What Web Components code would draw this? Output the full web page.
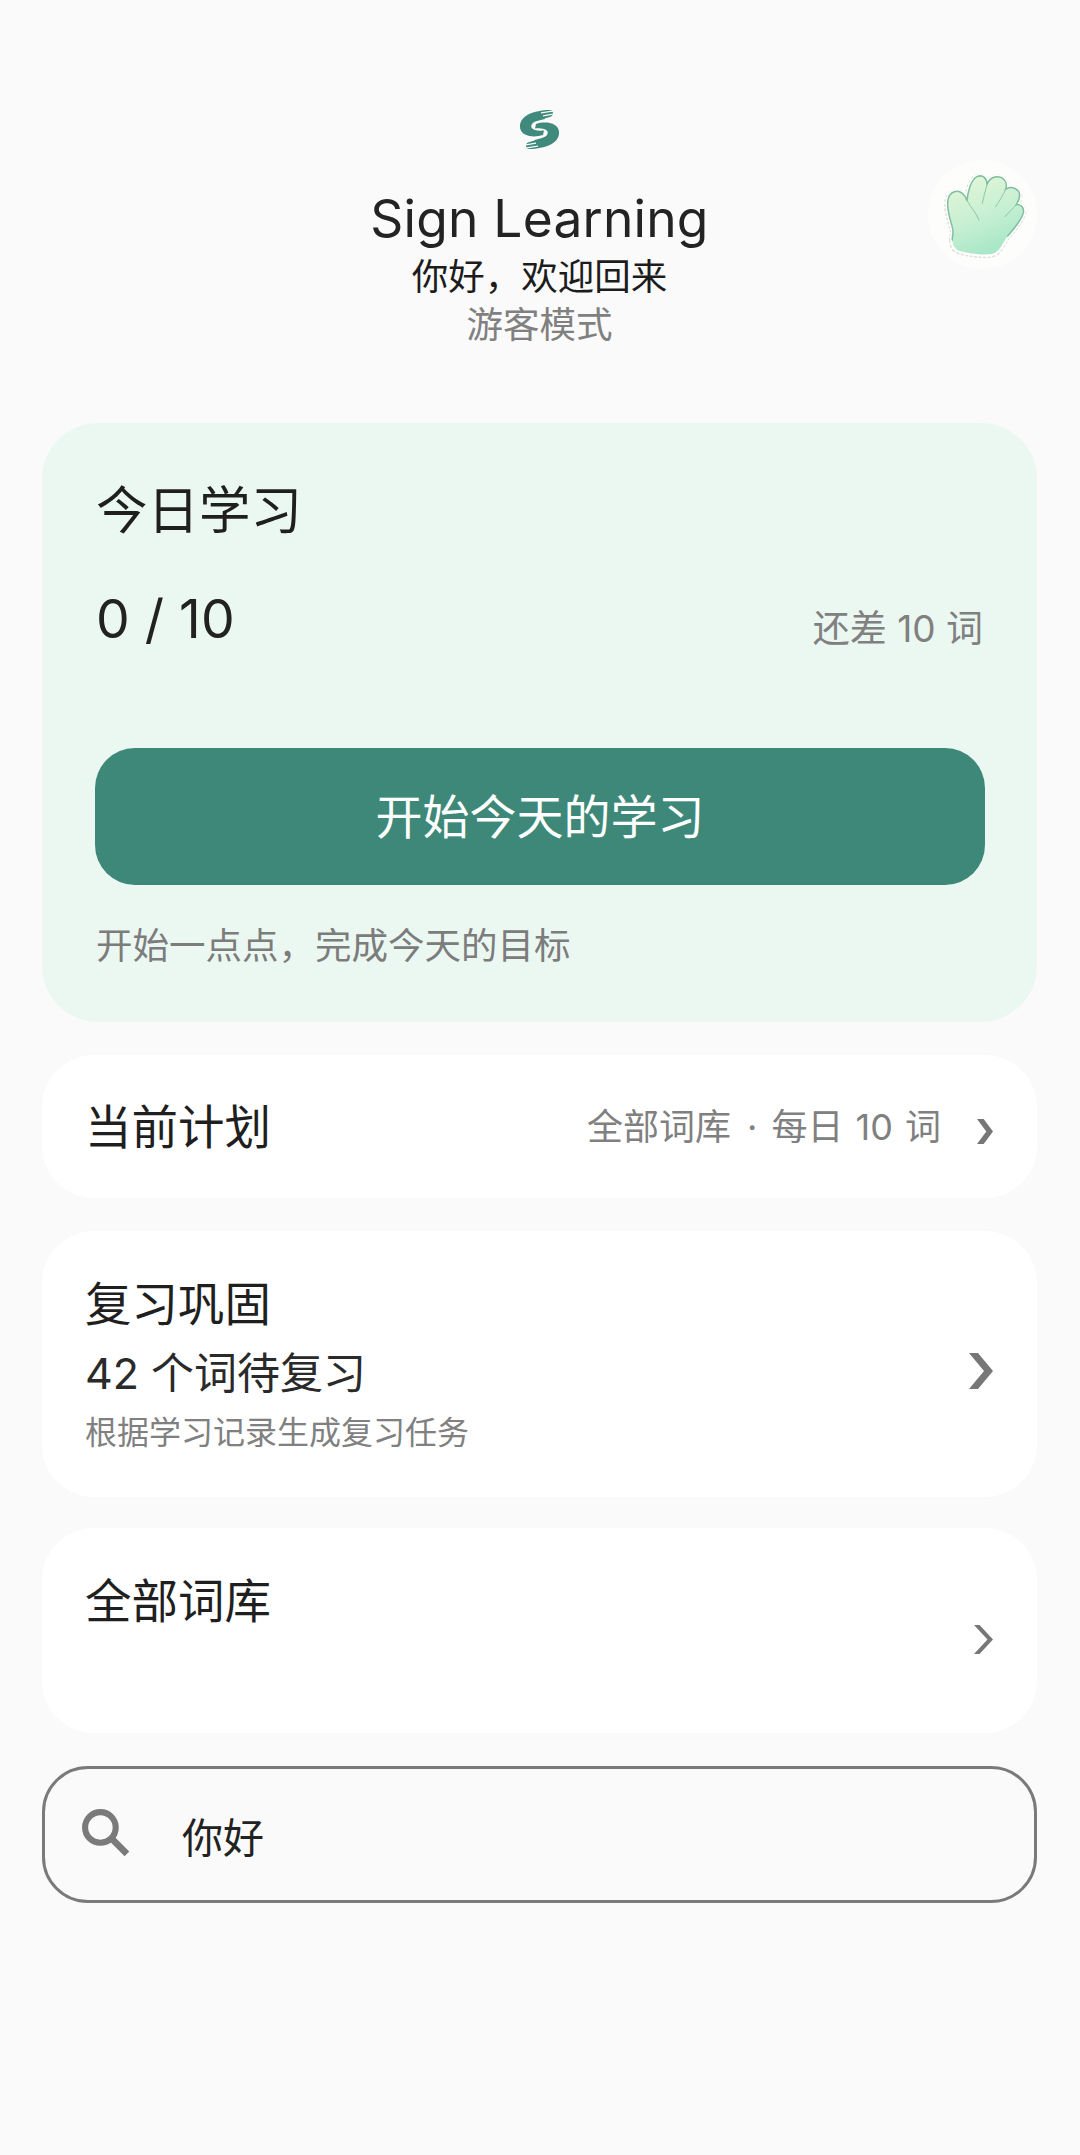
<!DOCTYPE html>
<html lang="zh-CN"><head><meta charset="utf-8"><title>Sign Learning</title>
<style>
html,body{margin:0;padding:0}
body{background:#fafafa;font-family:Inter,"Noto Sans CJK SC",sans-serif;color:#222;min-height:2155px}
</style></head><body>
<sl-app>
  <sl-header title-text="Sign Learning" greeting="你好，欢迎回来" mode="游客模式"></sl-header>
  <today-card heading="今日学习" progress="0 / 10" remain="还差 10 词" action="开始今天的学习" hint="开始一点点，完成今天的目标"></today-card>
  <plan-row heading="当前计划" left="全部词库" right="每日 10 词"></plan-row>
  <list-card heading="复习巩固" chev="24,36,9">
    <span slot="main">42 个词待复习</span>
    <span slot="sub">根据学习记录生成复习任务</span>
  </list-card>
  <list-card heading="全部词库" chev="19,29,7" tall></list-card>
  <search-box value="你好"></search-box>
</sl-app>
<script>
const def=(n,html,init)=>customElements.define(n,class extends HTMLElement{
  constructor(){super();this.attachShadow({mode:'open'}).innerHTML=html;}
  connectedCallback(){init&&init(this,this.shadowRoot)}
});
const chevSvg=(w,h,t)=>`<svg width="${w}" height="${h}" viewBox="0 0 24 36" preserveAspectRatio="none" aria-hidden="true"><polygon points="0,0 ${t},0 24,18 ${t},36 0,36 ${24-t},18" fill="#777"/></svg>`;

def('sl-app',`<style>:host{display:flex;flex-direction:column;gap:33px;padding:0 43px 0 42px;box-sizing:border-box;width:1080px}</style><slot></slot>`);

def('sl-logo',`<style>:host{display:block;width:41px;height:43px}svg{display:block}</style>
<svg width="41" height="43" viewBox="0 0 41 42" aria-hidden="true">
<g id="h"><path d="M31 1.5 C21 1.5 9 4 3.5 10.5 C-0.5 15.5 0 23 6 26 C11 28.5 18 28.5 24 26.5 L25 22 C20 22.5 14 22 12.5 19 C11.5 16 14 13.5 18 12.5 C23 11 29 10 33 7.5 C35 5 34 1.5 31 1.5 Z" fill="#3f8a7c"/>
<path d="M22 4.4 L35 2.4 M24 7.4 L35.5 5.4 M26 10.4 L33 8.8" stroke="#fafafa" stroke-width="1.1" fill="none"/></g>
<use href="#h" transform="rotate(180 20.5 21)"/>
</svg>`);

def('sl-avatar',`<style>:host{display:flex;align-items:center;justify-content:center;width:109px;height:109px;border-radius:50%;background:#fdfefb}svg{display:block;transform:translate(2px,0)}</style>
<svg width="109" height="109" viewBox="85 60 327 327" aria-hidden="true">
<defs><linearGradient id="g" x1="0.2" y1="0" x2="0.6" y2="1"><stop offset="0" stop-color="#e4f6d8"/><stop offset=".55" stop-color="#c6efd2"/><stop offset="1" stop-color="#a5e6c6"/></linearGradient></defs>
<path d="M152 300 C150 288 158 284 152 262 C146 238 132 205 140 175 C146 154 168 148 182 160 C190 166 194 176 196 182 C198 160 206 120 226 110 C244 102 256 116 256 134 C262 114 282 106 298 112 C314 120 316 136 312 148 C324 138 344 142 352 156 C358 170 350 184 344 194 C358 192 370 204 364 222 C356 244 336 268 318 288 C304 306 296 336 270 342 C240 346 200 340 172 332 C158 328 152 312 152 300 Z" fill="#fff" stroke="#dcdedc" stroke-width="18" stroke-linejoin="round" stroke-dasharray="8 5" transform="translate(-1 2)"/>
<path d="M152 300 C150 288 158 284 152 262 C146 238 132 205 140 175 C146 154 168 148 182 160 C190 166 194 176 196 182 C198 160 206 120 226 110 C244 102 256 116 256 134 C262 114 282 106 298 112 C314 120 316 136 312 148 C324 138 344 142 352 156 C358 170 350 184 344 194 C358 192 370 204 364 222 C356 244 336 268 318 288 C304 306 296 336 270 342 C240 346 200 340 172 332 C158 328 152 312 152 300 Z" fill="url(#g)" stroke="#fff" stroke-width="13" stroke-linejoin="round" paint-order="stroke"/>
<path d="M152 300 C150 288 158 284 152 262 C146 238 132 205 140 175 C146 154 168 148 182 160 C190 166 194 176 196 182 C198 160 206 120 226 110 C244 102 256 116 256 134 C262 114 282 106 298 112 C314 120 316 136 312 148 C324 138 344 142 352 156 C358 170 350 184 344 194 C358 192 370 204 364 222 C356 244 336 268 318 288" fill="none" stroke="#7fbf9f" stroke-width="4.5" stroke-linecap="round"/>
<path d="M196 182 C206 200 222 216 232 240 M256 134 C250 155 246 172 242 190 M312 148 C304 166 294 182 282 200 M344 194 C334 206 322 216 310 230" fill="none" stroke="#8cc7a9" stroke-width="3" stroke-linecap="round"/>
</svg>`);

def('sl-header',`<style>
:host{display:grid;grid-template-columns:1fr auto 1fr;padding-top:108px;margin-bottom:41px}
.c{grid-column:2;display:flex;flex-direction:column;align-items:center}
sl-logo{margin-bottom:37px}
.t{font-size:51.5px;line-height:60px;letter-spacing:.2px;color:#232323;white-space:nowrap}
.g{font-size:36.5px;line-height:48px;margin-top:5px;color:#1c1c1c}
.m{font-size:36.5px;line-height:48px;color:#808080}
sl-avatar{grid-column:3;justify-self:end;margin-top:52px}
</style><div class="c"><sl-logo></sl-logo><div class="t"></div><div class="g"></div><div class="m"></div></div><sl-avatar></sl-avatar>`,
(h,s)=>{s.querySelector('.t').textContent=h.getAttribute('title-text');s.querySelector('.g').textContent=h.getAttribute('greeting');s.querySelector('.m').textContent=h.getAttribute('mode');});

def('today-card',`<style>
:host{display:block;background:#ebf8f1;border-radius:56px;padding:52px 52px 51px 54px;box-sizing:border-box}
.h{font-size:51.5px;line-height:70px;color:#1f1f1f}
.r{display:flex;justify-content:space-between;align-items:flex-end;margin-top:39px}
.p{font-size:53.5px;line-height:70px;color:#222}
.rm{font-size:37px;line-height:50px;color:#808080;margin-right:2px}
.b{margin:94px 0 0 -1px;height:137px;border-radius:40px;background:#3d8878;color:#fff;font-size:47px;display:flex;align-items:center;justify-content:center;padding-bottom:6px;box-sizing:border-box}
.n{font-size:36.5px;line-height:50px;margin-top:36px;color:#7c7c7c;white-space:nowrap}
</style><div class="h"></div><div class="r"><div class="p"></div><div class="rm"></div></div><div class="b" role="button"></div><div class="n"></div>`,
(h,s)=>{for(const[k,a]of[['.h','heading'],['.p','progress'],['.rm','remain'],['.b','action'],['.n','hint']])s.querySelector(k).textContent=h.getAttribute(a);});

def('plan-row',`<style>
:host{display:flex;align-items:center;height:143px;background:#fff;border-radius:52px;padding:0 44px 0 43px;box-sizing:border-box}
.h{font-size:46.5px;color:#1f1f1f;flex:1;padding-bottom:6px}
.d{display:flex;align-items:baseline;font-size:36px;color:#808080;white-space:nowrap;padding-bottom:5px}
.dot{margin:0 14px 0 16px}
.rt{word-spacing:2px}
.c{display:flex;margin:10px 0 0 36px}
</style><div class="h"></div><div class="d"><span class="lf"></span><span class="dot">·</span><span class="rt"></span></div><div class="c"></div>`,
(h,s)=>{s.querySelector('.h').textContent=h.getAttribute('heading');s.querySelector('.lf').textContent=h.getAttribute('left');s.querySelector('.rt').textContent=h.getAttribute('right');s.querySelector('.c').innerHTML=chevSvg(16,25,10);});

def('list-card',`<style>
:host{display:flex;align-items:center;background:#fff;border-radius:52px;padding:42px 44px 42px 43px;box-sizing:border-box}
:host([tall]){height:205px;align-items:flex-start;margin-top:-2px}
.b{flex:1;display:flex;flex-direction:column}
.h{font-size:46.5px;line-height:60px;color:#1f1f1f;position:relative;top:1px}
.m{font-size:43px;line-height:60px;margin-top:10px;color:#2a2a2a}
.s{font-size:32px;line-height:44px;margin-top:8px;color:#808080}
.c{display:flex;align-self:center}
::slotted(*){white-space:nowrap}
</style><div class="b"><div class="h"></div><slot name="main"></slot><slot name="sub"></slot></div><div class="c"></div>`,
(h,s)=>{
 s.querySelector('.h').textContent=h.getAttribute('heading');
 const[w,ht,t]=h.getAttribute('chev').split(',').map(Number);
 s.querySelector('.c').innerHTML=chevSvg(w,ht,t);
 s.querySelector('.c').style.marginTop=h.hasAttribute('tall')?'18px':'14px';
 const wrap=(n,c)=>{const sl=s.querySelector(`slot[name=${n}]`);if(sl.assignedNodes().length){const d=document.createElement('div');d.className=c;sl.replaceWith(d);d.appendChild(sl);}};
 wrap('main','m');wrap('sub','s');
});

def('search-box',`<style>
:host{display:flex;align-items:center;height:137px;border:3px solid #7a7a7a;border-radius:46px;box-sizing:border-box;padding-left:36px}
svg{display:block;margin-top:-4px}
.v{font-size:41px;color:#222;margin-left:52px}
</style><svg width="49" height="49" viewBox="0 0 48 48" aria-hidden="true"><circle cx="19" cy="19" r="15" fill="none" stroke="#7a7a7a" stroke-width="6"/><path d="M30 30 L45 45" stroke="#7a7a7a" stroke-width="6.5" fill="none"/></svg><div class="v"></div>`,
(h,s)=>{s.querySelector('.v').textContent=h.getAttribute('value');});
</script>
</body></html>
